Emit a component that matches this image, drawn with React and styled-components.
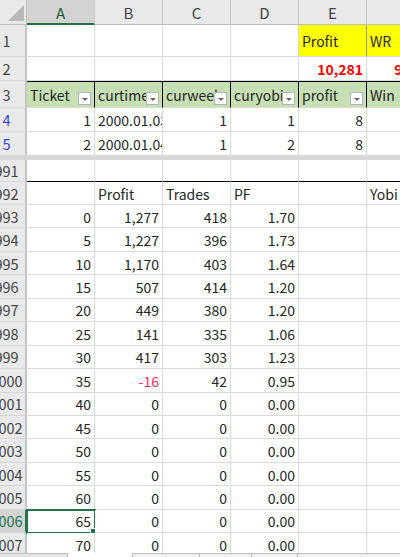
import styled, { createGlobalStyle } from 'styled-components'

const GlobalStyle = createGlobalStyle`
	html, body {
		margin: 0;
		padding: 0;
		overflow: hidden;
		background: #ffffff;
	}
	body {
		font-family: 'Noto Sans CJK JP', 'Noto Sans', sans-serif;
	}
`

const GRID = '39px repeat(5, 68px) 74px'

const Page = styled.div`
	width: 400px;
	height: 583px;
	display: flex;
	flex-direction: column;
	overflow: hidden;
`

const SheetArea = styled.div`
	height: 553px;
	flex-shrink: 0;
	overflow: hidden;
`

const Grid = styled.div`
	margin-left: -12px;
	display: flex;
	flex-direction: column;
`

const Row = styled.div`
	display: grid;
	grid-template-columns: ${GRID};
	height: ${({ h }) => h}px;
	flex-shrink: 0;
`

const Corner = styled.div`
	background: #e9e9e9;
	border-right: 1px solid #bcbcbc;
	border-bottom: 1px solid #bcbcbc;
	display: flex;
	align-items: flex-end;
	justify-content: flex-end;
	padding: 0 2px 3px 0;
	box-sizing: border-box;
`

const ColHead = styled.div`
	background: ${({ selected }) => (selected ? '#d3d3d3' : '#e9e9e9')};
	border-right: 1px solid #c4c4c4;
	border-bottom: ${({ selected }) => (selected ? '2px solid #217346' : '1px solid #bcbcbc')};
	color: ${({ selected }) => (selected ? '#1e5c38' : '#444444')};
	font-size: 15px;
	display: flex;
	align-items: center;
	justify-content: center;
	box-sizing: border-box;
	padding-top: 1px;
`

const RowHead = styled.div`
	background: ${({ selected }) => (selected ? '#d3d3d3' : '#e9e9e9')};
	border-right: ${({ selected }) => (selected ? '2px solid #217346' : '2px solid #c4c4c4')};
	border-bottom: 1px solid #d6d6d6;
	color: ${({ tone }) => tone};
	font-size: 14.5px;
	display: flex;
	align-items: center;
	justify-content: center;
	box-sizing: border-box;
	overflow: hidden;
	white-space: nowrap;
`

const Cell = styled.div`
	position: relative;
	background: ${({ bg }) => bg || '#ffffff'};
	border-right: 1px solid ${({ bg }) => (bg ? '#9a9a9a' : '#dadada')};
	border-bottom: 1px solid ${({ ruled }) => (ruled ? '#000000' : '#dadada')};
	color: ${({ color }) => color || '#262626'};
	font-weight: ${({ bold }) => (bold ? 700 : 400)};
	font-size: 14px;
	display: flex;
	align-items: center;
	justify-content: ${({ align }) => (align === 'right' ? 'flex-end' : 'flex-start')};
	padding: 1px 3px 0 3px;
	box-sizing: border-box;
	overflow: hidden;
	white-space: nowrap;
	outline: ${({ selected }) => (selected ? '2px solid #217346' : 'none')};
	outline-offset: -1px;

	${({ selected }) =>
		selected &&
		`
		overflow: visible;
		&::after {
			content: '';
			position: absolute;
			right: -3px;
			bottom: -3px;
			width: 5px;
			height: 5px;
			background: #217346;
			border: 1px solid #ffffff;
		}
	`}
`

const FieldCell = styled.div`
	position: relative;
	background: #c6e0b4;
	border-top: 1px solid #000000;
	border-right: 1px solid #000000;
	border-bottom: 1px solid #dadada;
	color: #262626;
	font-size: 14px;
	display: flex;
	align-items: center;
	padding: 0 3px;
	box-sizing: border-box;
	overflow: hidden;
	white-space: nowrap;
`

const FilterButton = styled.span`
	position: absolute;
	right: 3px;
	bottom: 2px;
	width: 13px;
	height: 13px;
	background: #ffffff;
	border: 1px solid #b4b4b4;
	box-sizing: border-box;
	display: flex;
	align-items: center;
	justify-content: center;

	&::before {
		content: '';
		border-left: 3px solid transparent;
		border-right: 3px solid transparent;
		border-top: 3px solid #666666;
		margin-top: 2px;
	}
`

const FreezeLine = styled.div`
	height: 4px;
	flex-shrink: 0;
	background: #d7d7d7;
`

const TabBar = styled.div`
	height: 30px;
	flex-shrink: 0;
	display: flex;
	background: #f0f0f0;
	font-size: 14px;
	color: #333333;
`

const TabNav = styled.div`
	width: 68px;
	background: #e6e6e6;
	border-top: 1px solid #bdbdbd;
	border-right: 1px solid #bdbdbd;
	box-sizing: border-box;
`

const Tab = styled.div`
	width: ${({ w }) => w}px;
	box-sizing: border-box;
	border-top: ${({ active }) => (active ? 'none' : '1px solid #bdbdbd')};
	border-right: 1px solid #bdbdbd;
	background: ${({ active }) => (active ? '#ffffff' : '#f0f0f0')};
	color: ${({ active }) => (active ? '#217346' : '#333333')};
	font-weight: ${({ active }) => (active ? 700 : 400)};
	display: flex;
	justify-content: ${({ active }) => (active ? 'flex-end' : 'center')};
	padding: 1px ${({ active }) => (active ? '13px' : '0')} 0;
`

const AddSheet = styled.div`
	flex: 1;
	border-top: 1px solid #bdbdbd;
	display: flex;
	padding: 1px 0 0 30px;
	color: #666666;
	font-size: 15px;
`

const cols = ['A', 'B', 'C', 'D', 'E', 'F']

const fields = ['Ticket', 'curtime', 'curweek', 'curyobi', 'profit', 'Win']

const tickets = [
	{ n: 4, cells: ['1', '2000.01.03', '1', '1', '8', ''] },
	{ n: 5, cells: ['2', '2000.01.04', '1', '2', '8', ''] },
]

const results = [
	[993, '0', '1,277', '418', '1.70'],
	[994, '5', '1,227', '396', '1.73'],
	[995, '10', '1,170', '403', '1.64'],
	[996, '15', '507', '414', '1.20'],
	[997, '20', '449', '380', '1.20'],
	[998, '25', '141', '335', '1.06'],
	[999, '30', '417', '303', '1.23'],
	[1000, '35', '-16', '42', '0.95'],
	[1001, '40', '0', '0', '0.00'],
	[1002, '45', '0', '0', '0.00'],
	[1003, '50', '0', '0', '0.00'],
	[1004, '55', '0', '0', '0.00'],
	[1005, '60', '0', '0', '0.00'],
	[1006, '65', '0', '0', '0.00'],
	[1007, '70', '0', '0', '0.00'],
]

const SelectAll = () => (
	<Corner>
		<svg width='16' height='16' viewBox='0 0 16 16'>
			<polygon points='16,0 16,16 0,16' fill='#b8b8b8' />
		</svg>
	</Corner>
)

const App = () => (
	<Page>
		<GlobalStyle />
		<SheetArea>
			<Grid>
				<Row h={25}>
					<SelectAll />
					{cols.map((c, i) => (
						<ColHead key={c} selected={i === 0}>
							{c}
						</ColHead>
					))}
				</Row>

				<Row h={32}>
					<RowHead tone='#444444'>1</RowHead>
					<Cell />
					<Cell />
					<Cell />
					<Cell />
					<Cell bg='#ffff00'>Profit</Cell>
					<Cell bg='#ffff00'>WR</Cell>
				</Row>

				<Row h={24}>
					<RowHead tone='#444444'>2</RowHead>
					<Cell />
					<Cell />
					<Cell />
					<Cell />
					<Cell align='right' color='#ff0000' bold>
						10,281
					</Cell>
					<Cell align='right' color='#ff0000' bold>
						92.5%
					</Cell>
				</Row>

				<Row h={27}>
					<RowHead tone='#444444'>3</RowHead>
					{fields.map((f) => (
						<FieldCell key={f}>
							{f}
							<FilterButton />
						</FieldCell>
					))}
				</Row>

				{tickets.map((t) => (
					<Row h={24} key={t.n}>
						<RowHead tone='#3145d1'>{t.n}</RowHead>
						{t.cells.map((v, i) => (
							<Cell key={i} align={i === 1 ? 'left' : 'right'}>
								{v}
							</Cell>
						))}
					</Row>
				))}

				<FreezeLine />

				<Row h={22}>
					<RowHead tone='#444444'>991</RowHead>
					{cols.map((c) => (
						<Cell key={c} ruled />
					))}
				</Row>

				<Row h={23}>
					<RowHead tone='#444444'>992</RowHead>
					<Cell />
					<Cell>Profit</Cell>
					<Cell>Trades</Cell>
					<Cell>PF</Cell>
					<Cell />
					<Cell>Yobi</Cell>
				</Row>

				{results.map(([n, yobi, profit, trades, pf]) => (
					<Row h={23.45} key={n}>
						<RowHead tone={n === 1006 ? '#217346' : '#444444'} selected={n === 1006}>
							{n}
						</RowHead>
						<Cell align='right' selected={n === 1006}>
							{yobi}
						</Cell>
						<Cell align='right' color={profit.startsWith('-') ? '#ff2d5f' : undefined}>
							{profit}
						</Cell>
						<Cell align='right'>{trades}</Cell>
						<Cell align='right'>{pf}</Cell>
						<Cell />
						<Cell />
					</Row>
				))}
			</Grid>
		</SheetArea>

		<TabBar>
			<TabNav />
			<Tab w={65} active>
				1
			</Tab>
			<Tab w={67}>Sheet2</Tab>
			<Tab w={52}>MAX</Tab>
			<Tab w={46}>MIN</Tab>
			<AddSheet>⊕</AddSheet>
		</TabBar>
	</Page>
)

export default App
